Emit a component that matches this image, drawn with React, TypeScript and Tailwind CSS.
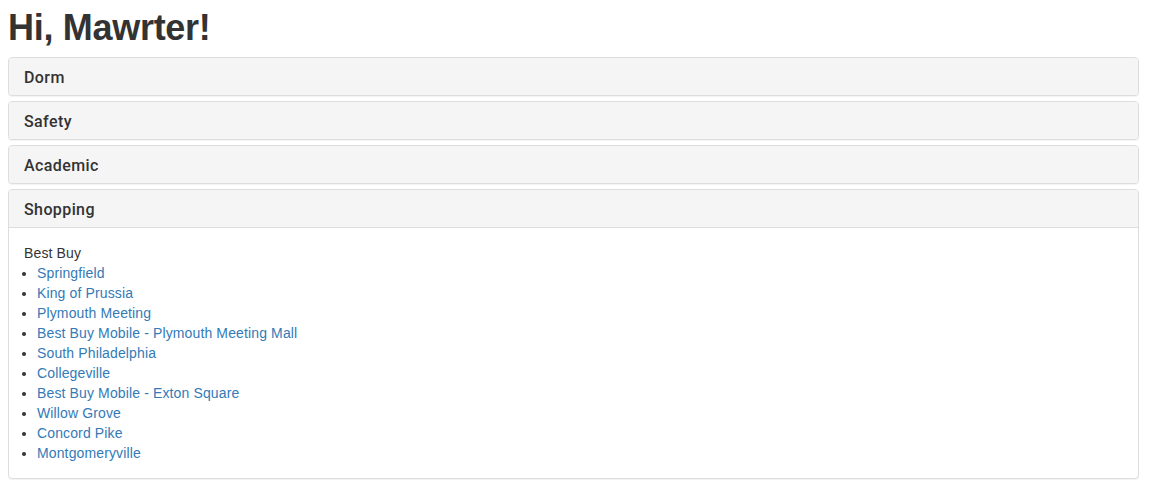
import React, { useState } from 'react';

const sections = ['Dorm', 'Safety', 'Academic', 'Shopping'];

const stores = [
  'Springfield',
  'King of Prussia',
  'Plymouth Meeting',
  'Best Buy Mobile - Plymouth Meeting Mall',
  'South Philadelphia',
  'Collegeville',
  'Best Buy Mobile - Exton Square',
  'Willow Grove',
  'Concord Pike',
  'Montgomeryville',
];

export default function App() {
  const [open, setOpen] = useState('Shopping');

  return (
    <div className="min-h-screen bg-white p-2 pr-[15px] text-[14px] leading-[20px] tracking-[0.13px] text-[#333] font-['Liberation_Sans',Arial,sans-serif]">
      <h1 className="mb-[9px] text-[36px] font-bold leading-[1.1] tracking-[-0.3px]">Hi, Mawrter!</h1>

      {/* Panel group */}
      <div className="flex flex-col gap-[5px]">
        {sections.map((name) => (
          <div key={name} className="rounded-[4px] border border-[#ddd] bg-white shadow-[0_1px_1px_rgba(0,0,0,0.05)]">
            <div
              className={`cursor-pointer rounded-t-[3px] bg-[#f5f5f5] px-[15px] pt-[11px] pb-[9px] ${
                open === name ? 'border-b border-[#ddd]' : 'rounded-b-[3px]'
              }`}
              onClick={() => setOpen(open === name ? '' : name)}
            >
              <h4 className="font-['Roboto',sans-serif] text-[16px] font-medium leading-[17px] tracking-[0.4px] text-[#333]">
                {name}
              </h4>
            </div>
            {open === name && (
              <div className="p-[15px]">
                <div>Best Buy</div>
                <ul className="list-disc pl-[13px]">
                  {stores.map((s) => (
                    <li key={s}>
                      <a href="#" className="text-[#337ab7] hover:underline">
                        {s}
                      </a>
                    </li>
                  ))}
                </ul>
              </div>
            )}
          </div>
        ))}
      </div>
    </div>
  );
}
